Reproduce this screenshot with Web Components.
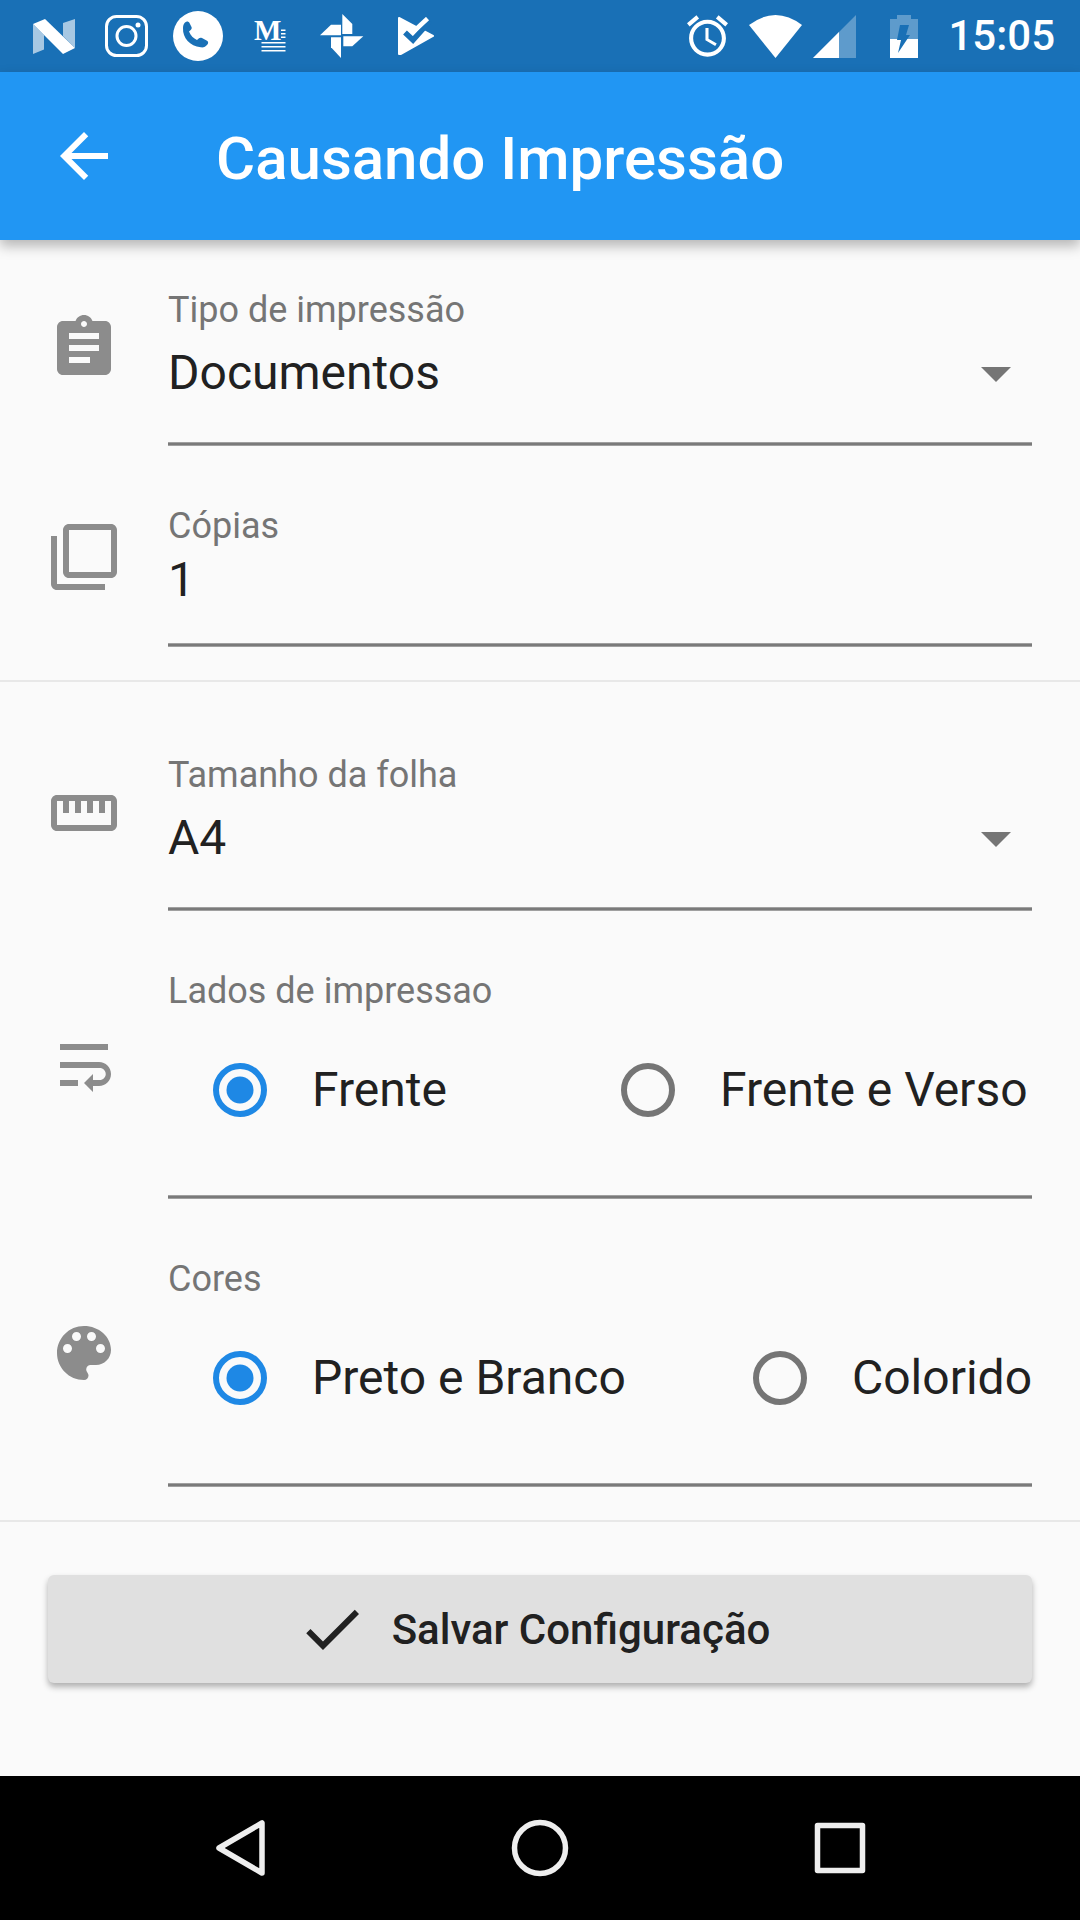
<!DOCTYPE html>
<html lang="pt">
<head>
<meta charset="utf-8">
<title>Causando Impressão</title>
<style>
  html, body { margin: 0; padding: 0; background: #fafafa; }
  body { width: 1080px; height: 1920px; overflow: hidden; font-family: Roboto, "Liberation Sans", sans-serif; }
</style>
</head>
<body>
<app-screen>
  <status-bar></status-bar>
  <app-bar title="Causando Impressão"></app-bar>
  <main-area>
    <form-tile icon="assignment" label="Tipo de impressão" style="--top:39px;--gap:14px;--bottom:45px">
      <select-value>Documentos</select-value>
    </form-tile>
    <form-tile icon="copies" label="Cópias" style="--top:38px;--gap:5px;--bottom:39px;margin-top:21px">
      <plain-value>1</plain-value>
    </form-tile>
    <line-divider style="margin:33px 0"></line-divider>
    <form-tile icon="ruler" label="Tamanho da folha" style="--top:39px;--gap:14px;--bottom:45px">
      <select-value>A4</select-value>
    </form-tile>
    <form-tile icon="wrap" label="Lados de impressao" style="--top:39px;--gap:6px;--bottom:37px;margin-top:20px">
      <radio-row first="408px">
        <radio-option checked>Frente</radio-option>
        <radio-option>Frente e Verso</radio-option>
      </radio-row>
    </form-tile>
    <form-tile icon="palette" label="Cores" style="--top:39px;--gap:6px;--bottom:37px;margin-top:20px">
      <radio-row first="540px">
        <radio-option checked>Preto e Branco</radio-option>
        <radio-option>Colorido</radio-option>
      </radio-row>
    </form-tile>
    <line-divider style="margin:33px 0 53px"></line-divider>
    <save-button>Salvar Configuração</save-button>
  </main-area>
  <nav-bar></nav-bar>
</app-screen>

<script>
const ICONS = {
  assignment: "M19 3h-4.18C14.4 1.84 13.3 1 12 1c-1.3 0-2.4.84-2.82 2H5c-1.1 0-2 .9-2 2v14c0 1.1.9 2 2 2h14c1.1 0 2-.9 2-2V5c0-1.1-.9-2-2-2zm-7 0c.55 0 1 .45 1 1s-.45 1-1 1-1-.45-1-1 .45-1 1-1zm2 14H7v-2h7v2zm3-4H7v-2h10v2zm0-4H7V7h10v2z",
  copies: "M3 5H1v16c0 1.1.9 2 2 2h16v-2H3V5zm18-4H7c-1.1 0-2 .9-2 2v14c0 1.1.9 2 2 2h14c1.1 0 2-.9 2-2V3c0-1.1-.9-2-2-2zm0 16H7V3h14v14z",
  ruler: "M21 6H3c-1.1 0-2 .9-2 2v8c0 1.1.9 2 2 2h18c1.1 0 2-.9 2-2V8c0-1.1-.9-2-2-2zm0 10H3V8h2v4h2V8h2v4h2V8h2v4h2V8h2v4h2V8h2v8z",
  wrap: "M4 19h6v-2H4v2zM20 5H4v2h16V5zm-3 6H4v2h13.25c1.1 0 2 .9 2 2s-.9 2-2 2H15v-2l-3 3 3 3v-2h2c2.21 0 4-1.79 4-4s-1.79-4-4-4z",
  palette: "M12 3c-4.97 0-9 4.03-9 9s4.03 9 9 9c.83 0 1.5-.67 1.5-1.5 0-.39-.15-.74-.39-1.01-.23-.26-.38-.61-.38-.99 0-.83.67-1.5 1.5-1.5H16c2.76 0 5-2.24 5-5 0-4.42-4.03-8-9-8zm-5.5 9c-.83 0-1.5-.67-1.5-1.5S5.67 9 6.5 9 8 9.67 8 10.5 7.33 12 6.5 12zm3-4C8.67 8 8 7.33 8 6.5S8.67 5 9.5 5s1.5.67 1.5 1.5S10.33 8 9.5 8zm5 0c-.83 0-1.5-.67-1.5-1.5S13.67 5 14.5 5s1.5.67 1.5 1.5S15.33 8 14.5 8zm3 4c-.83 0-1.5-.67-1.5-1.5S16.67 9 17.5 9s1.5.67 1.5 1.5-.67 1.5-1.5 1.5z",
  back: "M20 11H7.83l5.59-5.59L12 4l-8 8 8 8 1.41-1.41L7.83 13H20v-2z",
  check: "M9 16.17L4.83 12l-1.42 1.41L9 19 21 7l-1.41-1.41z",
  dropdown: "M7 10l5 5 5-5z"
};

function iconSvg(name, color) {
  return `<svg width="72" height="72" viewBox="0 0 24 24" fill="${color}"><path d="${ICONS[name]}"/></svg>`;
}

class AppScreen extends HTMLElement {
  constructor() {
    super();
    this.attachShadow({mode: "open"});
    this.shadowRoot.innerHTML = `
      <style>
        :host { display: flex; flex-direction: column; width: 1080px; height: 1920px; background: #fafafa; }
      </style>
      <slot></slot>`;
  }
}

class StatusBar extends HTMLElement {
  constructor() {
    super();
    this.attachShadow({mode: "open"});
    this.shadowRoot.innerHTML = `
      ${this.getStyle()}
      <div class="left">
        <svg style="margin-left:33px" width="42" height="35" viewBox="0 0 42 35">
          <path fill="#fff" fill-opacity=".62" d="M0 5v30l11-4.500V16zM30 4l12-4v29l-12-12z"/>
          <path fill="#fff" d="M0 5l12-5 30 29-12 6z"/>
        </svg>
        <svg style="margin-left:30px" width="43" height="42" viewBox="0 0 43 42" fill="none" stroke="#fff" stroke-width="3">
          <rect x="1.500" y="1.500" width="40" height="39" rx="10"/>
          <circle cx="21.500" cy="21" r="9.500"/>
          <circle cx="33" cy="10" r="2.500" fill="#fff" stroke="none"/>
        </svg>
        <svg style="margin-left:25px" width="50" height="50" viewBox="0 0 50 50">
          <circle cx="25" cy="25" r="25" fill="#fff"/>
          <path fill="#1970b6" d="M12 11.500c2-1.500 3.500-1 4.500.5l2 4c.5 1.200.2 2-.8 3l-1.700 1.500c1.500 4 4.500 7 8 8.500l2-1.700c1-.8 1.800-.8 3-.2l5 2.700c1.500 1 1.500 2.500.2 4-1.500 2-4 3-6.500 2.500C17 35 9.500 27 10 17c0-2.500.8-4.300 2-5.500z"/>
        </svg>
        <svg style="margin:0 0 12px 31px" width="32" height="44" viewBox="0 -12 32 44" fill="#fff">
          <text x="0" y="20" font-family="'Liberation Serif', serif" font-weight="700" font-size="29">M</text>
          <rect x="27" y="9.500" width="4.500" height="1.500"/>
          <rect x="27" y="13" width="4.500" height="1.500"/>
          <rect x="27" y="16.500" width="4.500" height="1.500"/>
          <rect x="7.500" y="22" width="24" height="1.500"/>
          <rect x="7.500" y="26" width="24" height="1.500"/>
          <rect x="7.500" y="30" width="24" height="1.500"/>
        </svg>
        <svg style="margin-left:34px" width="45" height="44" viewBox="0 0 45 44" fill="#fff">
          <path d="M22.300 0l10 10v10h-10z"/>
          <path d="M0 21.300l11-10.600h10v10.600z"/>
          <path d="M11 23.300h10V44L11 33.300z"/>
          <path d="M23.300 22.300h20l-11 10h-9z"/>
        </svg>
        <svg style="margin-left:33px" width="36" height="38" viewBox="0 0 36 38">
          <path fill="#fff" stroke="#fff" stroke-width="2" stroke-linejoin="round" d="M1 1l16 8.500L35 19 3 37H1z"/>
          <path fill="none" stroke="#1970b6" stroke-width="5.500" d="M7 15.500l8 7.500L32 4"/>
          <path fill="none" stroke="#fff" stroke-width="4.500" d="M14 16L29.500 1.500"/>
        </svg>
      </div>
      <div class="right">
        <svg style="margin-right:21px" width="41" height="42" viewBox="2 1.860 20 20.140" fill="#fff">
          <path d="M22 5.720l-4.600-3.860-1.290 1.530 4.600 3.860L22 5.720zM7.880 3.390L6.600 1.860 2 5.710l1.290 1.530 4.590-3.850zM12.500 8H11v6l4.750 2.850.75-1.230-4-2.370V8zM12 4c-4.970 0-9 4.030-9 9s4.020 9 9 9c4.970 0 9-4.030 9-9s-4.030-9-9-9zm0 16c-3.870 0-7-3.130-7-7s3.130-7 7-7 7 3.130 7 7-3.130 7-7 7z"/>
        </svg>
        <svg style="margin-right:11px" width="53" height="43" viewBox="0 0 53 43" fill="#fff">
          <path d="M0 10Q26.500-10 53 10L26.500 43z"/>
        </svg>
        <svg style="margin-right:34px" width="43" height="43" viewBox="0 0 43 43" fill="#fff">
          <path fill-opacity=".3" d="M0 43L43 0v43z"/>
          <path d="M0 43l26-26v26z"/>
        </svg>
        <svg style="margin-right:30px" width="28" height="43" viewBox="0 0 28 43" fill="#fff">
          <path fill-opacity=".3" d="M7 0h14v4h7v20H0V4h7z"/>
          <path d="M0 24h28v19H0z"/>
          <path fill="#1970b6" d="M10 10h9l-3 10h4L8 38l3-13H7z"/>
        </svg>
        <span class="time">15:05</span>
      </div>`;
  }
  getStyle() {
    return `
      <style>
        :host { display: flex; justify-content: space-between; align-items: center; height: 72px; background: #1970b6; flex: none; }
        .left, .right { display: flex; align-items: center; }
        svg { display: block; flex: none; }
        .time { font: 500 42px/72px Roboto, sans-serif; color: #fff; margin-right: 25px; }
      </style>`;
  }
}

class AppBar extends HTMLElement {
  constructor() {
    super();
    this.attachShadow({mode: "open"});
  }
  connectedCallback() {
    this.shadowRoot.innerHTML = `
      <style>
        :host { display: flex; align-items: center; height: 168px; flex: none; background: #2196f3; position: relative; z-index: 2;
                box-shadow: 0 6px 12px rgba(0,0,0,.28); padding-left: 48px; }
        svg { display: block; }
        h1 { margin: 5px 0 0 96px; font: 500 60px/72px Roboto, sans-serif; color: #fff; }
      </style>
      ${iconSvg("back", "#fff")}
      <h1>${this.getAttribute("title")}</h1>`;
  }
}

class MainArea extends HTMLElement {
  constructor() {
    super();
    this.attachShadow({mode: "open"});
    this.shadowRoot.innerHTML = `
      <style>
        :host { display: block; flex: 1; padding-top: 10px; background: #fafafa; }
      </style>
      <slot></slot>`;
  }
}

class FormTile extends HTMLElement {
  constructor() {
    super();
    this.attachShadow({mode: "open"});
  }
  connectedCallback() {
    this.shadowRoot.innerHTML = `
      <style>
        :host { display: flex; align-items: center; padding: 0 48px; }
        .icon { width: 120px; flex: none; }
        svg { display: block; }
        /* underline: the 1dp line is soft in the reference, so 4 rows with lighter edges */
        .field { flex: 1; min-width: 0; padding: var(--top) 0 var(--bottom);
                 background: linear-gradient(#a0a0a0 25%, #7a7a7a 25%, #7a7a7a 75%, #a0a0a0 75%) bottom / 100% 4px no-repeat; }
        label { display: block; font: 400 36px/42px Roboto, sans-serif; color: #757575; margin-bottom: var(--gap); }
      </style>
      <div class="icon">${iconSvg(this.getAttribute("icon"), "#8c8c8c")}</div>
      <div class="field">
        <label>${this.getAttribute("label")}</label>
        <slot></slot>
      </div>`;
  }
}

class PlainValue extends HTMLElement {
  constructor() {
    super();
    this.attachShadow({mode: "open"});
    this.shadowRoot.innerHTML = `
      <style>
        :host { display: block; font: 400 48px/56px Roboto, sans-serif; color: #212121; }
      </style>
      <slot></slot>`;
  }
}

class SelectValue extends HTMLElement {
  constructor() {
    super();
    this.attachShadow({mode: "open"});
    this.shadowRoot.innerHTML = `
      <style>
        :host { display: flex; justify-content: space-between; align-items: center; height: 56px; font: 400 48px/56px Roboto, sans-serif; color: #212121; }
        svg { display: block; flex: none; }
      </style>
      <span><slot></slot></span>
      ${iconSvg("dropdown", "#757575")}`;
  }
}

class RadioRow extends HTMLElement {
  constructor() {
    super();
    this.attachShadow({mode: "open"});
  }
  connectedCallback() {
    this.shadowRoot.innerHTML = `
      <style>
        :host { display: grid; grid-template-columns: ${this.getAttribute("first")} auto; height: 144px; }
      </style>
      <slot></slot>`;
  }
}

class RadioOption extends HTMLElement {
  constructor() {
    super();
    this.attachShadow({mode: "open"});
  }
  connectedCallback() {
    const on = this.hasAttribute("checked");
    const color = on ? "#1e88e5" : "#757575";
    this.shadowRoot.innerHTML = `
      <style>
        :host { display: flex; align-items: center; white-space: nowrap; font: 400 48px/56px Roboto, sans-serif; color: #212121; }
        .box { width: 144px; height: 144px; flex: none; display: flex; align-items: center; justify-content: center; }
        svg { display: block; }
      </style>
      <div class="box">
        <svg width="54" height="54" viewBox="0 0 54 54">
          <circle cx="27" cy="27" r="24" fill="none" stroke="${color}" stroke-width="6"/>
          ${on ? `<circle cx="27" cy="27" r="13.500" fill="${color}"/>` : ""}
        </svg>
      </div>
      <slot></slot>`;
  }
}

class LineDivider extends HTMLElement {
  constructor() {
    super();
    this.attachShadow({mode: "open"});
    this.shadowRoot.innerHTML = `
      <style>
        :host { display: block; height: 2px; background: #e8e8e8; }
      </style>`;
  }
}

class SaveButton extends HTMLElement {
  constructor() {
    super();
    this.attachShadow({mode: "open"});
    this.shadowRoot.innerHTML = `
      <style>
        :host { display: flex; align-items: center; justify-content: center; height: 108px; margin: 0 48px; padding: 2px 14px 0 0; box-sizing: border-box;
                background: #e0e0e0; border-radius: 6px; box-shadow: 0 4px 6px rgba(0,0,0,.3);
                font: 500 42px/48px Roboto, sans-serif; color: #212121; }
        svg { display: block; margin: -2px 24px 0 0; }
      </style>
      ${iconSvg("check", "#212121")}
      <slot></slot>`;
  }
}

class NavBar extends HTMLElement {
  constructor() {
    super();
    this.attachShadow({mode: "open"});
    this.shadowRoot.innerHTML = `
      <style>
        :host { display: flex; justify-content: center; align-items: center; gap: 240px; height: 144px; flex: none; background: #000; }
        svg { display: block; }
      </style>
      <svg width="60" height="60" viewBox="0 0 60 60" fill="none" stroke="#eee" stroke-width="5.500" stroke-linejoin="round">
        <path d="M52 5v50L9 30z"/>
      </svg>
      <svg width="60" height="60" viewBox="0 0 60 60" fill="none" stroke="#eee" stroke-width="5.500">
        <circle cx="30" cy="30" r="25.500"/>
      </svg>
      <svg width="60" height="60" viewBox="0 0 60 60" fill="none" stroke="#eee" stroke-width="5.500" stroke-linejoin="round">
        <rect x="7.500" y="7.500" width="45" height="45"/>
      </svg>`;
  }
}

customElements.define("app-screen", AppScreen);
customElements.define("status-bar", StatusBar);
customElements.define("app-bar", AppBar);
customElements.define("main-area", MainArea);
customElements.define("form-tile", FormTile);
customElements.define("plain-value", PlainValue);
customElements.define("select-value", SelectValue);
customElements.define("radio-row", RadioRow);
customElements.define("radio-option", RadioOption);
customElements.define("line-divider", LineDivider);
customElements.define("save-button", SaveButton);
customElements.define("nav-bar", NavBar);
</script>
</body>
</html>
